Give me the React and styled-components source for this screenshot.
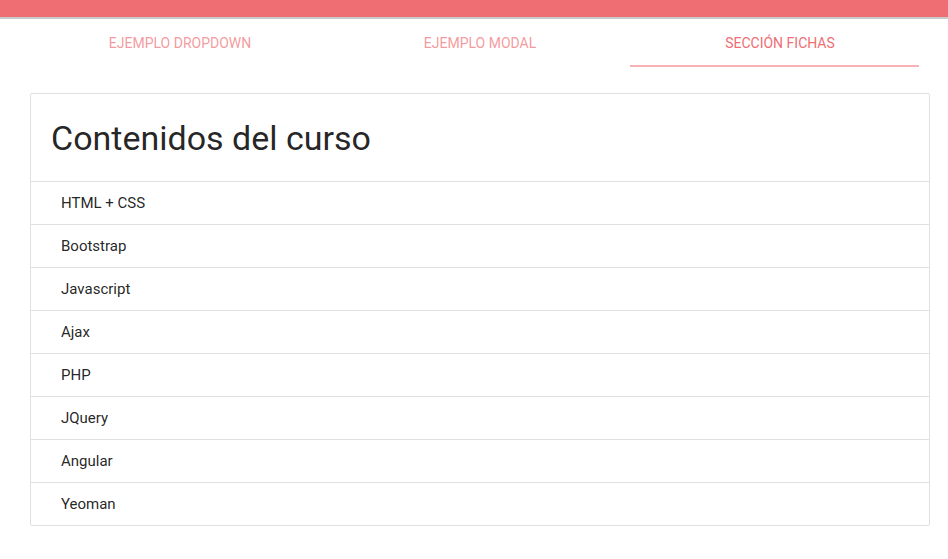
import React, { useState } from 'react'
import styled, { createGlobalStyle } from 'styled-components'

const GlobalStyle = createGlobalStyle`
  html, body {
    margin: 0;
    padding: 0;
    background: #fff;
    font-family: Roboto, 'Noto Sans', sans-serif;
    color: rgba(0, 0, 0, 0.87);
  }
`

const tabs = ['Ejemplo dropdown', 'Ejemplo modal', 'Sección fichas']

const contenidos = [
  'HTML + CSS',
  'Bootstrap',
  'Javascript',
  'Ajax',
  'PHP',
  'JQuery',
  'Angular',
  'Yeoman',
]

const App = () => {
  const [active, setActive] = useState(2)

  return (
    <Page>
      <GlobalStyle />
      <TopBar />
      <Container>
        <Tabs>
          {tabs.map((t, i) => (
            <Tab key={t} active={i === active} onClick={() => setActive(i)}>
              {t}
            </Tab>
          ))}
        </Tabs>
        <Collection>
          <Header>Contenidos del curso</Header>
          {contenidos.map((c) => (
            <Item key={c}>{c}</Item>
          ))}
        </Collection>
      </Container>
    </Page>
  )
}

const Page = styled.div`
  min-height: 559px;
`

const TopBar = styled.nav`
  height: 17px;
  background: #ee6e73;
  box-shadow: 0 2px 0 #c9cbcc;
`

const Container = styled.main`
  width: 900px;
  margin-left: 30px;
`

const Tabs = styled.div`
  position: relative;
  display: grid;
  grid-template-columns: repeat(3, 300px);
  height: 48px;
  margin-top: 2px;
  background: #fff;
`

const Tab = styled.div`
  position: relative;
  display: flex;
  align-items: center;
  justify-content: center;
  height: 48px;
  padding-bottom: 1px;
  box-sizing: border-box;
  font-size: 14px;
  text-transform: uppercase;
  cursor: pointer;
  color: ${(p) => (p.active ? '#ee6e73' : 'rgba(238, 110, 115, 0.7)')};

  &::after {
    content: '';
    display: ${(p) => (p.active ? 'block' : 'none')};
    position: absolute;
    left: 0;
    right: 11px;
    bottom: 0;
    height: 2px;
    background: #f6b2b5;
  }
`

const Collection = styled.section`
  margin-top: 26px;
  border: 1px solid #e0e0e0;
  border-radius: 2px;
  overflow: hidden;
`

const Header = styled.h4`
  margin: 0;
  height: 87px;
  display: flex;
  align-items: center;
  padding: 0 20px;
  font-size: 34px;
  font-weight: 400;
  color: rgba(0, 0, 0, 0.87);
  border-bottom: 1px solid #e0e0e0;
`

const Item = styled.div`
  height: 42px;
  display: flex;
  align-items: center;
  padding: 0 30px;
  font-size: 15px;
  color: rgba(0, 0, 0, 0.87);
  border-bottom: 1px solid #e0e0e0;

  &:last-child {
    border-bottom: none;
  }
`

export default App
